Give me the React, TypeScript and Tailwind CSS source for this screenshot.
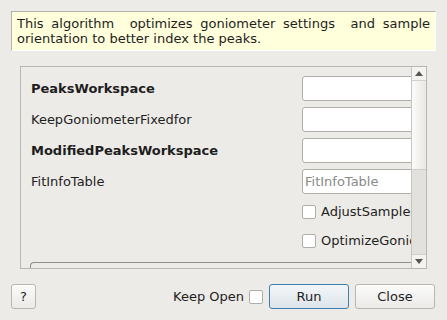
import React from 'react';

const fields = [
  { label: 'PeaksWorkspace', bold: true, placeholder: '' },
  { label: 'KeepGoniometerFixedfor', bold: false, placeholder: '' },
  { label: 'ModifiedPeaksWorkspace', bold: true, placeholder: '' },
  { label: 'FitInfoTable', bold: false, placeholder: 'FitInfoTable' },
];

const checks = ['AdjustSampleOffsets', 'OptimizeGoniometerTilt'];

function Arrow({ down }: { down?: boolean }) {
  return (
    <svg width="8" height="5" viewBox="0 0 8 5" className={down ? 'rotate-180' : ''}>
      <path d="M0 5 L4 0 L8 5 Z" fill="#555753" />
    </svg>
  );
}

function CheckBox() {
  return <div className="w-[14px] h-[14px] shrink-0 rounded-[2px] border border-[#b0aea9] bg-white" />;
}

export default function App() {
  return (
    <div className="w-[447px] h-[320px] bg-[#edebe8] text-[13px] text-[#1e1e1e] flex flex-col font-['DejaVu_Sans',sans-serif]">
      <div className="mx-[11px] mt-[11px] h-[40px] border border-[#b3b1ac] border-b-white border-r-white bg-[#ffffdc] px-[5px] pt-[4px] leading-[15px] text-justify">
        This algorithm&nbsp; optimizes goniometer settings&nbsp; and sample orientation to better index the peaks.
      </div>

      <div className="mx-[20px] mt-[15px] h-[203px] border border-[#b9b7b2] flex">
        <div className="flex-1 overflow-hidden pt-[9px] pl-[10px]">
          {fields.map((f) => (
            <div key={f.label} className="flex items-center h-[25px] mb-[6px]">
              <div className={`w-[271px] shrink-0 ${f.bold ? 'font-bold' : ''}`}>{f.label}</div>
              <div className="w-[130px] h-[25px] shrink-0 rounded-[3px] border border-[#b0aea9] bg-white flex items-center pl-[2px] text-[#8a8a86]">
                {f.placeholder}
              </div>
            </div>
          ))}
          <div className="mt-[-3px]">
            {checks.map((c) => (
              <div key={c} className="flex items-center h-[29px] pl-[271px] whitespace-nowrap">
                <CheckBox />
                <span className="ml-[5px]">{c}</span>
              </div>
            ))}
          </div>
          <div className="ml-[-1px] mt-[7px] h-[30px] w-[420px] rounded-tl-[4px] border-t border-l border-[#8f8d88]" />
        </div>
        <div className="w-[15px] shrink-0 border-l border-[#c8c6c1] flex flex-col">
          <div className="h-[14px] flex items-center justify-center bg-[#f4f3f1] border-b border-[#d2d0cb]">
            <Arrow />
          </div>
          <div className="h-[89px] bg-gradient-to-r from-[#fbfbfa] to-[#e9e8e5] border-b border-[#cfcdc8]" />
          <div className="flex-1 bg-[#e2e1de]" />
          <div className="h-[14px] flex items-center justify-center bg-[#f4f3f1] border-t border-[#d2d0cb]">
            <Arrow down />
          </div>
        </div>
      </div>

      <div className="mt-[15px] h-[25px] flex items-center pl-[11px] pr-[12px]">
        <div className="w-[25px] h-[25px] rounded-[3px] border border-[#b9b7b2] bg-gradient-to-b from-[#fbfbfa] to-[#ebeae7] flex items-center justify-center text-[13px]">
          ?
        </div>
        <div className="flex-1" />
        <span>Keep Open</span>
        <div className="ml-[5px]">
          <CheckBox />
        </div>
        <div className="ml-[6px] w-[80px] h-[25px] rounded-[3px] border border-[#3c7fb1] bg-gradient-to-b from-[#f3f6f8] to-[#dde4ea] flex items-center justify-center">
          Run
        </div>
        <div className="ml-[6px] w-[80px] h-[25px] rounded-[3px] border border-[#b9b7b2] bg-gradient-to-b from-[#fbfbfa] to-[#ebeae7] flex items-center justify-center">
          Close
        </div>
      </div>
    </div>
  );
}
